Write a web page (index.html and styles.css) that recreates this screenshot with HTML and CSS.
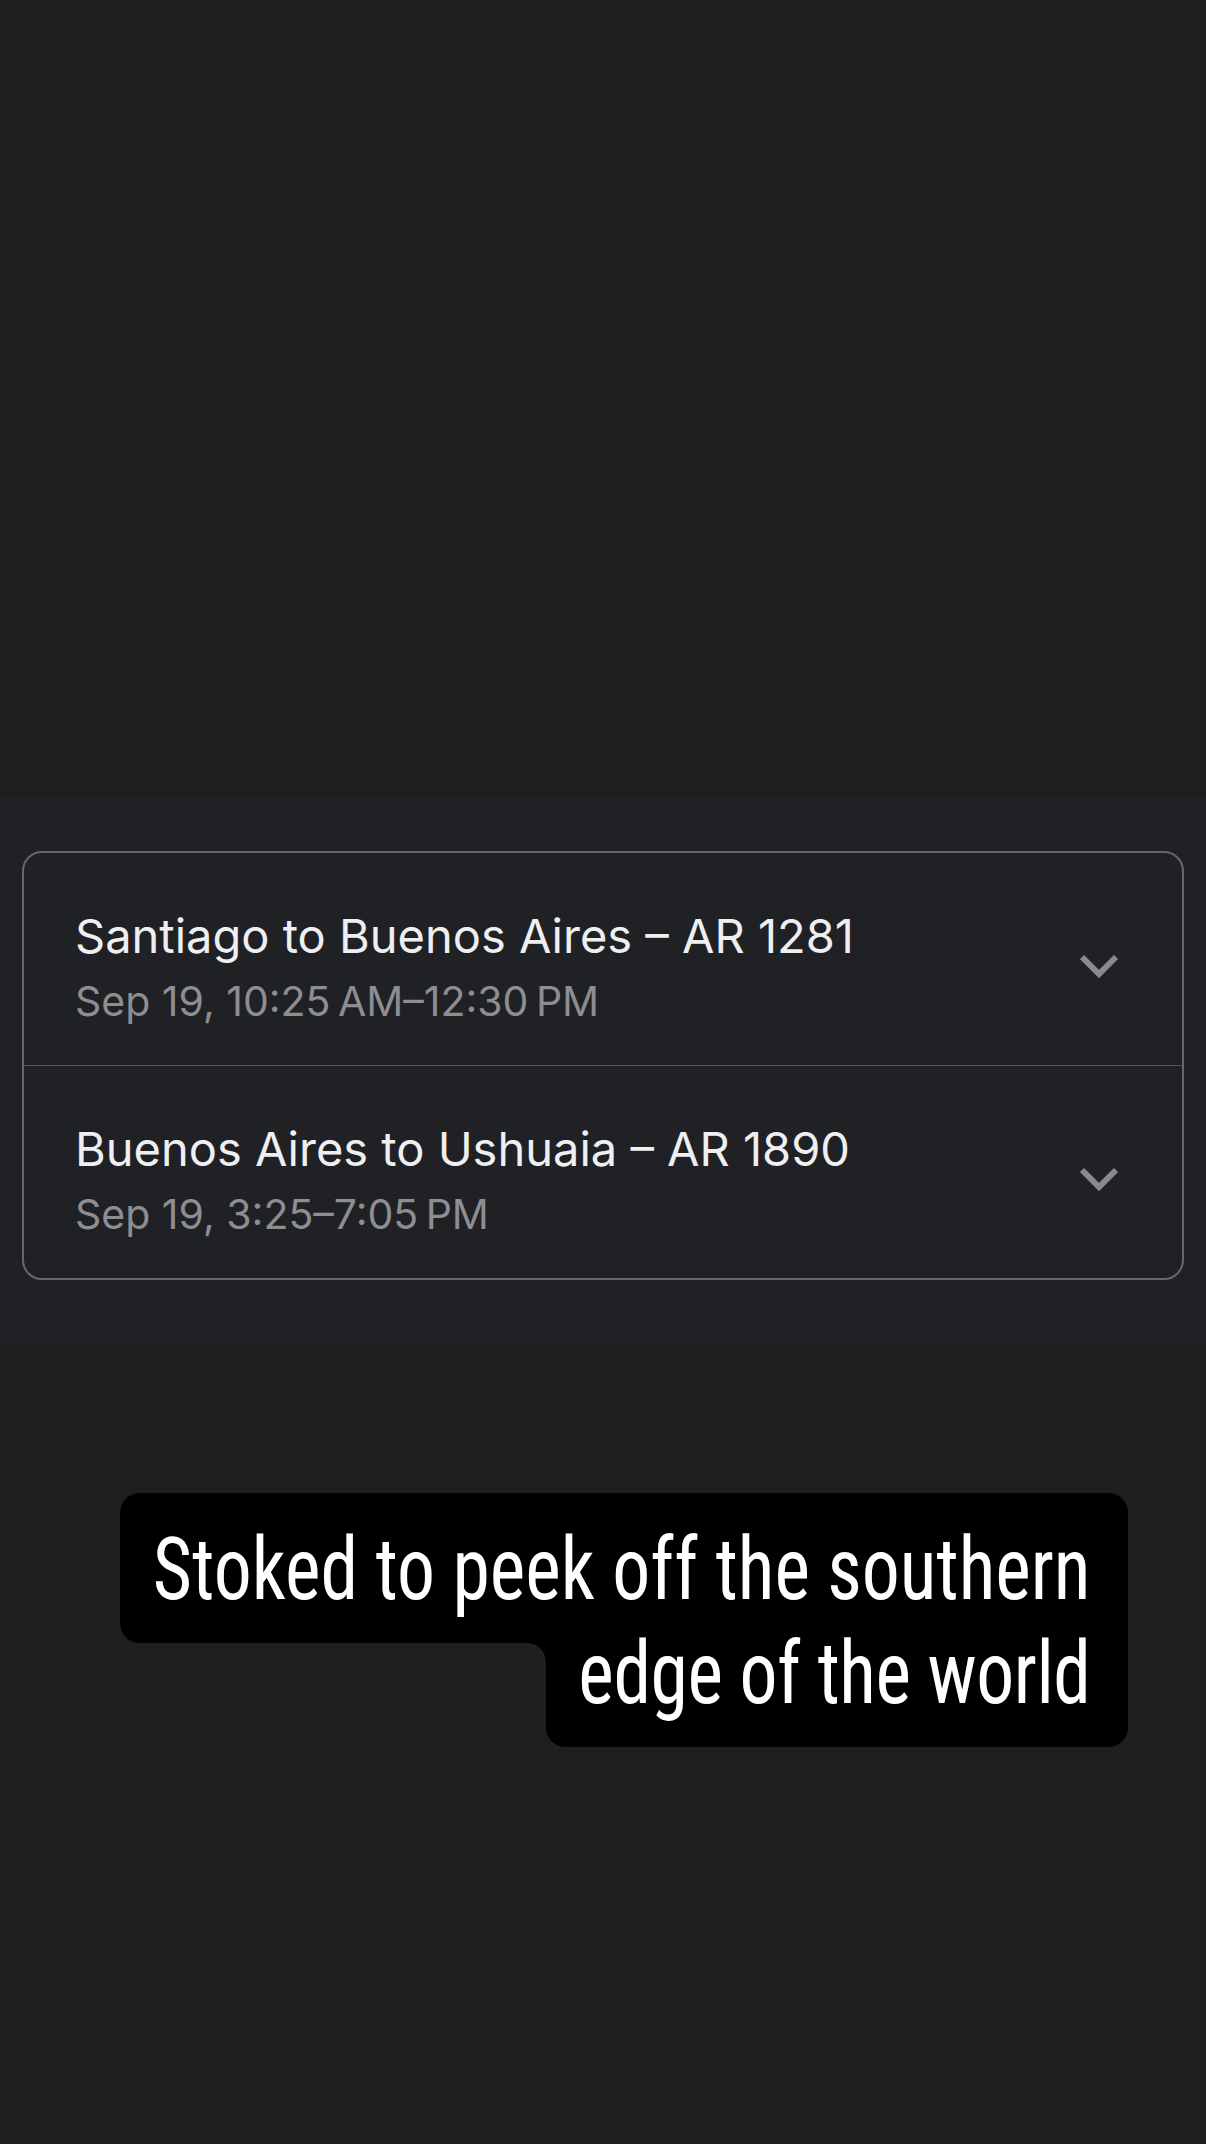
FILE: index.html
```html
<!DOCTYPE html>
<html lang="en">
<head>
<meta charset="utf-8">
<title>Flights</title>
<link rel="stylesheet" href="styles.css">
</head>
<body>
<div class="page">
  <div class="top-space"></div>
  <section class="band">
    <div class="card">
      <div class="row">
        <div class="info">
          <div class="title">Santiago to Buenos Aires – AR 1281</div>
          <div class="sub">Sep 19, 10:25&#8239;AM–12:30&#8239;PM</div>
        </div>
        <svg class="chev" width="40" height="26" viewBox="0 0 40 26" aria-hidden="true"><path d="M3 3 L20 20 L37 3" fill="none" stroke="#8a8a8e" stroke-width="6"/></svg>
      </div>
      <div class="divider"></div>
      <div class="row">
        <div class="info">
          <div class="title">Buenos Aires to Ushuaia – AR 1890</div>
          <div class="sub">Sep 19, 3:25–7:05&#8239;PM</div>
        </div>
        <svg class="chev" width="40" height="26" viewBox="0 0 40 26" aria-hidden="true"><path d="M3 3 L20 20 L37 3" fill="none" stroke="#8a8a8e" stroke-width="6"/></svg>
      </div>
    </div>
  </section>
  <div class="caption">
    <div class="sticker">
      <div class="line line-first">Stoked to peek off the southern</div>
      <div class="line line-last">edge of the world</div>
    </div>
  </div>
</div>
</body>
</html>
```
FILE: styles.css
```css
html, body {
  margin: 0;
  padding: 0;
  background: #1f1f1f;
}
.page {
  width: 1206px;
  height: 2144px;
  background: #1f1f1f;
  overflow: hidden;
}
.top-space {
  height: 796px;
}
.band {
  background: #202125;
  padding: 55px 22px 64px 22px;
}
.card {
  border: 2px solid #67676b;
  border-radius: 20px;
  background: #202125;
}
.row {
  display: flex;
  align-items: center;
  justify-content: space-between;
  height: 212px;
  box-sizing: border-box;
  padding: 55px 63px 39px 51px;
}
.divider {
  height: 1px;
  background: #55555a;
}
.info {
  display: flex;
  flex-direction: column;
}
.title {
  font-family: Inter, "Noto Sans", sans-serif;
  font-size: 47px;
  line-height: 56px;
  color: #efeff1;
  font-weight: 400;
}
.sub {
  font-family: Inter, "Noto Sans", sans-serif;
  font-size: 41px;
  line-height: 50px;
  margin-top: 12px;
  color: #8d8d92;
}
.chev {
  display: block;
  flex: none;
}
.caption {
  margin-top: 149px;
  padding-right: 78px;
  display: flex;
  justify-content: flex-end;
}
.sticker {
  display: flex;
  flex-direction: column;
  align-items: flex-end;
  transform: scaleX(0.86);
  transform-origin: right center;
}
.line {
  position: relative;
  background: #000;
  color: #fff;
  font-family: "Roboto Condensed", "Liberation Sans Narrow", "DejaVu Sans Condensed", Roboto, sans-serif;
  font-stretch: condensed;
  font-size: 88px;
  line-height: 60px;
  white-space: nowrap;
  padding-left: 38px;
  padding-right: 44px;
}
.line-first {
  padding-top: 46px;
  padding-bottom: 44px;
  border-radius: 23px 23px 0 23px / 20px 20px 0 20px;
}
.line-last {
  padding-top: 0;
  padding-bottom: 44px;
  letter-spacing: -0.5px;
  border-radius: 0 0 23px 23px / 0 0 20px 20px;
}
.line-last::before {
  content: "";
  position: absolute;
  left: -21px;
  top: 0;
  width: 21px;
  height: 18px;
  background: radial-gradient(21px 18px at 0 100%, transparent 97%, #000 100%);
}
```
